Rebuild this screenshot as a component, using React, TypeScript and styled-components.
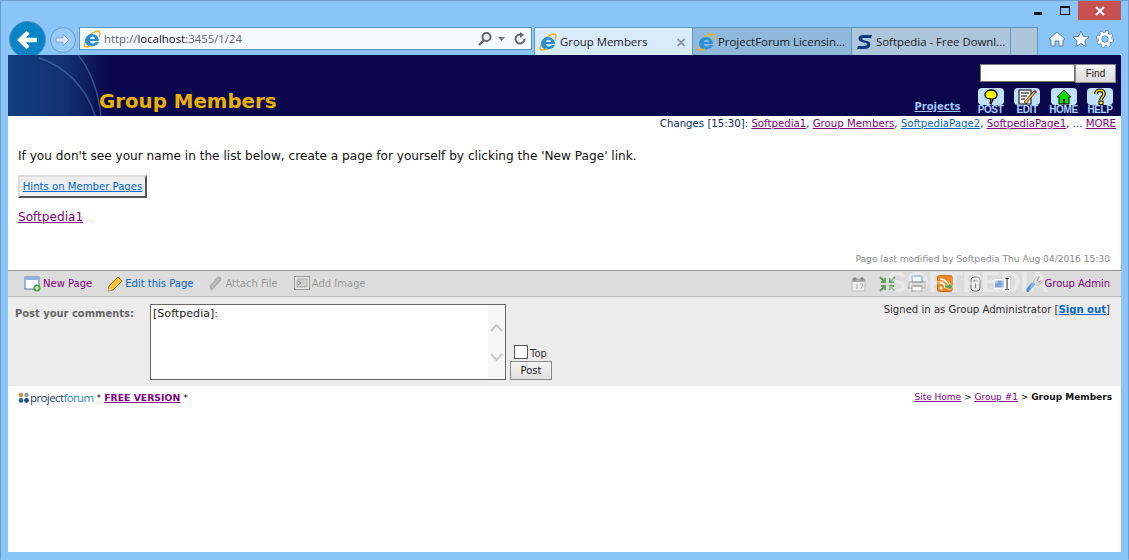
import React from "react";
import styled, { createGlobalStyle } from "styled-components";

const Global = createGlobalStyle`
    html, body { margin: 0; padding: 0; background: #8ac5fa; }
    * { box-sizing: border-box; }
`;

const Verdana = `"DejaVu Sans", Verdana, sans-serif`;
const Segoe = `"Open Sans", "Noto Sans", sans-serif`;

const Window = styled.div`
    width: 1129px;
    height: 560px;
    background: #8ac5fa;
    border: 1px solid #6a9fd0;
    border-bottom-color: #8ac5fa;
    display: flex;
    flex-direction: column;
    overflow: hidden;
`;

// 브라우저 상단
const Caption = styled.div`
    height: 20px;
    display: flex;
    justify-content: flex-end;
    padding-right: 7px;
`;
const CaptionButton = styled.div<{ $close?: boolean }>`
    width: ${(p) => (p.$close ? "43px" : "27px")};
    height: 19px;
    background: ${(p) => (p.$close ? "#c75050" : "transparent")};
    display: flex;
    align-items: center;
    justify-content: center;
    color: #fff;
`;
const MinIcon = styled.div`
    width: 8px;
    height: 3px;
    background: #111;
    margin-top: 5px;
`;
const MaxIcon = styled.div`
    width: 10px;
    height: 9px;
    border: 1px solid #111;
    border-top-width: 2px;
`;
const NavRow = styled.div`
    height: 34px;
    display: flex;
    align-items: flex-end;
    padding-left: 8px;
    position: relative;
`;
const BackClip = styled.div`
    width: 37px;
    height: 34px;
    overflow: hidden;
    flex: none;
`;
const BackButton = styled.div`
    width: 37px;
    height: 37px;
    border-radius: 50%;
    background: #0a84c6;
    border: 1px solid #5b8fb8;
    display: flex;
    align-items: center;
    justify-content: center;
`;
const Forward = styled.div`
    width: 26px;
    height: 26px;
    border-radius: 50%;
    border: 1px solid #6a9ccb;
    background: #94cbfb;
    margin: 0 3px 2px 4px;
    display: flex;
    align-items: center;
    justify-content: center;
    flex: none;
`;
const AddressBar = styled.div`
    width: 453px;
    height: 23px;
    margin-bottom: 5px;
    background: #f5faff;
    border: 1px solid #5f97c4;
    display: flex;
    align-items: center;
    padding: 0 4px 0 3px;
    gap: 3px;
    font: 11.4px ${Segoe};
    color: #666;
    flex: none;
`;
const Host = styled.span`
    color: #111;
`;
const AddressTools = styled.div`
    margin-left: auto;
    display: flex;
    align-items: center;
    gap: 5px;
    color: #666;
`;
const Tabs = styled.div`
    display: flex;
    margin-left: 2px;
    height: 28px;
    flex: none;
`;
const Tab = styled.div<{ $bg: string; $first?: boolean }>`
    width: 159px;
    height: 28px;
    background: ${(p) => p.$bg};
    border: 1px solid #5f97c4;
    border-left-width: ${(p) => (p.$first ? "1px" : "0")};
    border-bottom: 0;
    display: flex;
    align-items: center;
    gap: 3px;
    padding-left: 4px;
    font: 11.4px ${Segoe};
    color: #1a1a1a;
    white-space: nowrap;
    overflow: hidden;
`;
const NewTab = styled.div`
    width: 27px;
    height: 28px;
    background: #aec6dc;
    border: 1px solid #5f97c4;
    border-left: 0;
    border-bottom: 0;
`;
const TabClose = styled.span`
    margin-left: auto;
    margin-right: 5px;
    color: #8a97a3;
    font: bold 14px ${Verdana};
`;
const Favorites = styled.div`
    display: flex;
    gap: 6px;
    margin: 0 0 7px 10px;
    align-items: center;
`;

// 페이지 영역
const Page = styled.div`
    margin: 0 7px 0 7px;
    height: 497px;
    background: #fff;
    font-family: ${Verdana};
    display: flex;
    flex-direction: column;
    flex: none;
    position: relative;
`;
const Banner = styled.div`
    height: 61px;
    background: #0b074d;
    display: flex;
    justify-content: space-between;
    position: relative;
    overflow: hidden;
    flex: none;
`;
const BannerArt = styled.svg`
    position: absolute;
    left: 0;
    top: 0;
`;
const Title = styled.h1`
    position: relative;
    margin: 35px 0 0 91px;
    font: bold 19.8px ${Verdana};
    color: #e8b000;
    white-space: nowrap;
`;
const BannerRight = styled.div`
    display: flex;
    flex-direction: column;
    align-items: flex-end;
    padding: 9px 5px 0 0;
`;
const FindForm = styled.div`
    display: flex;
`;
const FindInput = styled.div`
    width: 95px;
    height: 18px;
    background: #fff;
    border: 1px solid #777;
`;
const FindButton = styled.div`
    width: 41px;
    height: 19px;
    background: linear-gradient(#f4f4f4, #dcdcdc);
    border: 1px solid #888;
    font: 10px "Liberation Sans", sans-serif;
    color: #222;
    display: flex;
    align-items: center;
    justify-content: center;
`;
const BannerNav = styled.div`
    display: flex;
    align-items: flex-end;
    margin: 5px 3px 0 0;
`;
const ProjectsLink = styled.a`
    font: bold 10px ${Verdana};
    color: #a0c4ff;
    text-decoration: underline;
    margin-right: 17px;
    margin-bottom: 3px;
`;
const NavButton = styled.div`
    width: 26px;
    margin-left: 10.5px;
    display: flex;
    flex-direction: column;
    align-items: center;
    &:first-of-type { margin-left: 0; }
`;
const NavIconBox = styled.div`
    width: 26px;
    height: 17px;
    background: #bfe0ff;
    border-radius: 4px;
    display: flex;
    align-items: center;
    justify-content: center;
`;
const NavLabel = styled.div`
    font: bold 10px "Liberation Sans", sans-serif;
    letter-spacing: -0.4px;
    color: #a9d2ff;
    line-height: 10px;
    white-space: nowrap;
`;
const Changes = styled.div`
    font-size: 10.2px;
    line-height: 15px;
    text-align: right;
    color: #0b2a66;
    padding-right: 5px;
    flex: none;
`;
const PageLink = styled.a<{ $fresh?: boolean }>`
    color: ${(p) => (p.$fresh ? "#0066cc" : "#800080")};
    text-decoration: underline;
`;
const Content = styled.div`
    padding: 17px 10px 0;
    height: 122px;
    flex: none;
`;
const Intro = styled.p`
    margin: 0;
    font-size: 12.12px;
    line-height: 16px;
    color: #111;
`;
const HintBox = styled.div`
    display: inline-block;
    margin-top: 11px;
    height: 23px;
    width: 129px;
    background: #eee;
    border: 2px solid;
    border-color: #ddd #555 #555 #ddd;
    font-size: 10.1px;
    line-height: 19px;
    text-align: center;
    white-space: nowrap;
`;
const MemberLink = styled.a`
    display: block;
    margin-top: 11px;
    font-size: 12.1px;
    line-height: 16px;
    color: #800080;
    text-decoration: underline;
`;
const Modified = styled.div`
    font-size: 9.1px;
    line-height: 12px;
    color: #8a8a8a;
    text-align: right;
    padding-right: 11px;
    height: 17px;
    flex: none;
`;
const Toolbar = styled.div`
    height: 27px;
    background: #dcdcdc;
    border-top: 1px solid #999;
    border-bottom: 1px solid #bbb;
    display: flex;
    align-items: center;
    padding: 0 11px 0 16px;
    font-size: 10px;
    flex: none;
    position: relative;
`;
const ToolItem = styled.div<{ $color: string; $gap?: number }>`
    display: flex;
    align-items: center;
    gap: 2px;
    color: ${(p) => p.$color};
    margin-right: ${(p) => p.$gap ?? 15}px;
    white-space: nowrap;
`;
const ToolIcons = styled.div`
    margin-left: auto;
    display: flex;
    align-items: center;
`;
const ToolSlot = styled.div<{ $gap: number }>`
    margin-right: ${(p) => p.$gap}px;
    display: flex;
`;
const Watermark = styled.div`
    position: absolute;
    right: 73px;
    top: -5px;
    font: bold 29px/32px "Liberation Sans", sans-serif;
    color: rgba(255, 255, 255, 0.4);
    letter-spacing: -0.6px;
    pointer-events: none;
`;
const CommentArea = styled.div`
    height: 89px;
    background: #ececec;
    display: flex;
    padding: 7px 11px 0 7px;
    flex: none;
`;
const CommentLabel = styled.div`
    width: 135px;
    font: bold 9.95px ${Verdana};
    color: #666;
    margin-top: 4px;
`;
const CommentBox = styled.div`
    width: 356px;
    height: 76px;
    border: 1px solid #666;
    background: #fff;
    display: flex;
    justify-content: space-between;
    font: 11.1px ${Verdana};
    color: #222;
`;
const CommentText = styled.div`
    padding: 2px;
`;
const ScrollTrack = styled.div`
    width: 17px;
    background: #f6f6f6;
    display: flex;
    flex-direction: column;
    justify-content: center;
    align-items: center;
    gap: 21px;
`;
const PostColumn = styled.div`
    margin-left: 4px;
    height: 76px;
    display: flex;
    flex-direction: column;
    justify-content: flex-end;
`;
const TopRow = styled.div`
    display: flex;
    align-items: flex-end;
    margin-left: 4px;
    font-size: 10px;
    color: #333;
    line-height: 10px;
`;
const CheckBox = styled.div`
    width: 14px;
    height: 14px;
    background: #fff;
    border: 1px solid #555;
    margin-right: 2px;
`;
const PostButton = styled.div`
    width: 42px;
    height: 19px;
    margin-top: 2px;
    background: linear-gradient(#f4f4f4, #e0e0e0);
    border: 1px solid #888;
    font: 10px ${Verdana};
    color: #222;
    display: flex;
    align-items: center;
    justify-content: center;
`;
const SignedIn = styled.div`
    margin-left: auto;
    font-size: 10.1px;
    color: #333;
    white-space: nowrap;
`;
const SignOut = styled.a`
    color: #0066cc;
    font-weight: bold;
    text-decoration: underline;
`;
const Footer = styled.div`
    display: flex;
    justify-content: space-between;
    padding: 4px 10px 0;
    font-size: 9px;
    line-height: 14px;
    color: #111;
`;
const FooterLeft = styled.div`
    display: flex;
    align-items: center;
    white-space: pre;
    font-size: 9.3px;
`;
const Logo = styled.span`
    font: 11.5px ${Segoe};
    color: #1f3f6a;
    margin-left: 0;
    letter-spacing: -0.6px;
`;
const LogoAccent = styled.span`
    color: #2b8ab0;
`;
const FreeLink = styled.a`
    color: #800080;
    font-weight: bold;
    text-decoration: underline;
`;
const Crumbs = styled.div`
    margin-right: -1px;
`;

const IeIcon = () => (
    <svg width="18" height="18" viewBox="0 0 18 18" style={{ flex: "none" }}>
        <path d="M1 15C2 9 8 2 15 1c2 0 3 2 1 6" fill="none" stroke="#f2b51c" strokeWidth="1.4" />
        <path d="M2 11c0-4 3-7 7-7s7 3 7 7H7c0 3 4 3 6 1h3c-2 6-14 6-14-1zm5-2h5c0-3-5-3-5 0z" fill="#2b8fd8" />
        <path d="M1 15c0 3 4 2 7 1" fill="none" stroke="#f2b51c" strokeWidth="1.4" />
    </svg>
);

const SoftIcon = () => (
    <svg width="17" height="18" viewBox="0 0 17 18" style={{ flex: "none" }}>
        <path d="M16 2H7C3 2 2 5 3 7c1 3 8 2 8 4 0 1-1 2-3 2H2l-1 3h8c4 0 6-3 5-6-1-3-8-2-8-4 0-1 1-1 2-1h7z" fill="#12397f" />
    </svg>
);

const BackArrow = () => (
    <svg width="22" height="22" viewBox="0 0 20 20">
        <path d="M18 10H3M10 3l-7 7 7 7" fill="none" stroke="#fff" strokeWidth="4" />
    </svg>
);

const ForwardArrow = () => (
    <svg width="16" height="16" viewBox="0 0 16 16">
        <path d="M1 6h7V2l6 6-6 6v-4H1z" fill="#d8e8f6" stroke="#7ea6cc" />
    </svg>
);

const HomeGlyph = () => (
    <svg width="18" height="18" viewBox="0 0 18 18">
        <path d="M9 2 1 9l2 1v6h4v-5h4v5h4v-6l2-1z" fill="#fff" stroke="#3f6d92" strokeWidth=".8" />
    </svg>
);
const StarGlyph = () => (
    <svg width="18" height="18" viewBox="0 0 18 18">
        <path d="M9 1l2.4 5.4 5.6.6-4.2 3.8 1.2 5.7L9 13.6l-5 2.9 1.2-5.7L1 7l5.6-.6z" fill="#fff" stroke="#3f6d92" strokeWidth=".8" />
    </svg>
);
const GearGlyph = () => (
    <svg width="18" height="18" viewBox="0 0 18 18">
        <circle cx="9" cy="9" r="5" fill="none" stroke="#3f6d92" strokeWidth="4.200" />
        <circle cx="9" cy="9" r="7" fill="none" stroke="#3f6d92" strokeWidth="3.400" strokeDasharray="3.400 2.100" />
        <circle cx="9" cy="9" r="5" fill="none" stroke="#fff" strokeWidth="3" />
        <circle cx="9" cy="9" r="7" fill="none" stroke="#fff" strokeWidth="2.400" strokeDasharray="2.600 2.900" strokeDashoffset="-.4" />
    </svg>
);

const PostGlyph = () => (
    <svg width="16" height="16" viewBox="0 0 16 16">
        <path d="M8 1c4 0 6 2 6 5 0 2-2 4-4 4l-2 5-1-1 1-4C4 10 2 8 2 6c0-3 2-5 6-5z" fill="#ffff00" stroke="#000" strokeWidth="1.300" />
    </svg>
);
const EditGlyph = () => (
    <svg width="20" height="16" viewBox="0 0 20 16">
        <rect x="2" y="1" width="12" height="14" fill="#fff" stroke="#000" />
        <path d="M4 4h8M4 7h6M4 10h4" stroke="#000" />
        <path d="M7 13 17 2l2 1L9 15z" fill="#e8b040" stroke="#000" strokeWidth=".6" />
        <path d="M16 3l2-2 2 2-1 1z" fill="#c02020" />
    </svg>
);
const HomeNavGlyph = () => (
    <svg width="16" height="16" viewBox="0 0 16 16">
        <path d="M8 1 1 8h2v7h10V8h2z" fill="#00e000" stroke="#000" />
        <rect x="7" y="10" width="2" height="5" fill="#000" />
    </svg>
);
const HelpGlyph = () => (
    <svg width="14" height="17" viewBox="0 0 14 17">
        <path d="M3 6c0-5 8-5 8 0 0 3-3 3-3 6" fill="none" stroke="#000" strokeWidth="3.6" />
        <path d="M3 6c0-5 8-5 8 0 0 3-3 3-3 6" fill="none" stroke="#ffe000" strokeWidth="1.6" />
        <rect x="6" y="13" width="4" height="3.5" fill="#ffe000" stroke="#000" />
    </svg>
);

const NewPageIcon = () => (
    <svg width="17" height="16" viewBox="0 0 17 16">
        <rect x="1" y="1" width="14" height="12" fill="#fff" stroke="#5a7fb0" />
        <rect x="1" y="1" width="14" height="3" fill="#8fb4e0" />
        <circle cx="13" cy="12" r="3.5" fill="#4aa84a" />
        <path d="M11 12h4M13 10v4" stroke="#fff" />
    </svg>
);
const PencilIcon = () => (
    <svg width="16" height="16" viewBox="0 0 16 16">
        <path d="M1 15l1-5L11 1l4 4-9 9z" fill="#f5c242" stroke="#b07a10" />
        <path d="M1 15l1-4 3 3z" fill="#e8c8a0" />
    </svg>
);
const ClipIcon = () => (
    <svg width="15" height="16" viewBox="0 0 15 16">
        <path d="M3 14 12 4c1-2-1-3-2-2L3 10c-1 2 1 3 2 2l6-7" fill="none" stroke="#b0b0b0" strokeWidth="2.200" />
    </svg>
);
const ImageIcon = () => (
    <svg width="16" height="15" viewBox="0 0 16 15">
        <rect x=".5" y=".5" width="15" height="13" fill="#e8e8e8" stroke="#999" />
        <rect x="3" y="3" width="10" height="8" fill="#d0d0d0" stroke="#aaa" />
        <path d="M4 5l3 2-3 2" fill="none" stroke="#888" />
    </svg>
);
const CalendarIcon = () => (
    <svg width="15" height="16" viewBox="0 0 15 16">
        <rect x="1" y="3" width="13" height="12" fill="#eee" stroke="#bbb" />
        <rect x="1" y="3" width="13" height="3" fill="#aaa" />
        <circle cx="4" cy="3" r="1.800" fill="#888" />
        <circle cx="11" cy="3" r="1.800" fill="#888" />
        <path d="M6 8v5M9 8h3l-2 5" stroke="#aaa" fill="none" />
    </svg>
);
const CollapseIcon = () => (
    <svg width="17" height="16" viewBox="0 0 17 16">
        <path d="M1 1l5 5M6 2v4H2M16 1l-5 5M11 2v4h4M1 15l5-5M6 14v-4H2M16 15l-5-5M11 14v-4h4" fill="none" stroke="#5c9c5c" strokeWidth="1.8" />
    </svg>
);
const PrintIcon = () => (
    <svg width="18" height="17" viewBox="0 0 18 17">
        <rect x="4" y="1" width="10" height="7" fill="#f4f8ff" stroke="#5f8fd0" />
        <rect x="1" y="7" width="16" height="6" fill="#ddd" stroke="#777" />
        <rect x="4" y="11" width="10" height="5" fill="#fff" stroke="#777" />
    </svg>
);
const RssIcon = () => (
    <svg width="16" height="17" viewBox="0 0 16 17">
        <rect x=".5" y=".5" width="15" height="16" rx="2" fill="#f08a24" stroke="#c76a10" />
        <circle cx="4" cy="13" r="1.5" fill="#fff" />
        <path d="M3 8c3 0 5 2 5 5M3 4c5 0 9 4 9 9" fill="none" stroke="#fff" strokeWidth="1.6" />
        <path d="M8 10h4V8l4 3.5-4 3.5v-2H8z" fill="#5a9c3c" stroke="#fff" strokeWidth=".4" />
    </svg>
);
const BinIcon = () => (
    <svg width="11" height="16" viewBox="0 0 11 16">
        <rect x="1" y="1" width="9" height="14" rx="3" fill="#e8e8e8" stroke="#777" />
        <path d="M3 5h5M5.500 7v5" fill="none" stroke="#777" />
    </svg>
);
const RenameIcon = () => (
    <svg width="16" height="12" viewBox="0 0 16 12">
        <rect x="0" y="1" width="16" height="10" fill="#fafafa" />
        <rect x="1" y="2.500" width="9" height="7" fill="#7fa4d8" />
        <path d="M11 .5h4M13 .5v11M11 11.500h4" stroke="#222" fill="none" />
    </svg>
);
const WrenchIcon = () => (
    <svg width="17" height="17" viewBox="0 0 17 17">
        <path d="M2 15 9 7" stroke="#4a8ad8" strokeWidth="4" strokeLinecap="round" />
        <path d="M8 8c-1-4 2-7 6-6l-3 3 2 2 3-2c1 3-3 6-6 5z" fill="#d0d0d0" stroke="#999" />
    </svg>
);
const Chevron = ({ up }: { up?: boolean }) => (
    <svg width="13" height="9" viewBox="0 0 13 9">
        <path d={up ? "M1 8l5.500-6 5.500 6" : "M1 1l5.500 6 5.500-6"} fill="none" stroke="#c8c8c8" strokeWidth="2" />
    </svg>
);
const LogoMark = () => (
    <svg width="12" height="12" viewBox="0 0 12 12">
        <circle cx="3" cy="3" r="2.200" fill="#d88a3a" />
        <circle cx="8.500" cy="3" r="2.200" fill="#8aa0b0" />
        <circle cx="3" cy="8.500" r="2.400" fill="#2a6a9a" />
        <circle cx="8.500" cy="8.500" r="2.400" fill="#1f4f7f" />
    </svg>
);

function App() {
    return (
        <Window>
            <Global />
            <Caption>
                <CaptionButton><MinIcon /></CaptionButton>
                <CaptionButton><MaxIcon /></CaptionButton>
                <CaptionButton $close>
                    <svg width="10" height="10" viewBox="0 0 10 10">
                        <path d="M1 1l8 8M9 1l-8 8" stroke="#fff" strokeWidth="2" />
                    </svg>
                </CaptionButton>
            </Caption>
            <NavRow>
                <BackClip>
                    <BackButton><BackArrow /></BackButton>
                </BackClip>
                <Forward><ForwardArrow /></Forward>
                <AddressBar>
                    <IeIcon />
                    <span>http://<Host>localhost</Host>:3455/1/24</span>
                    <AddressTools>
                        <svg width="16" height="16" viewBox="0 0 16 16">
                            <circle cx="9.500" cy="6" r="4" fill="none" stroke="#666" strokeWidth="2" />
                            <path d="M7 9l-5 5" stroke="#666" strokeWidth="2.400" />
                        </svg>
                        <svg width="7" height="4" viewBox="0 0 7 4"><path d="M0 0h7L3.500 4z" fill="#777" /></svg>
                        <svg width="14" height="14" viewBox="0 0 14 14" style={{ marginLeft: 3 }}>
                            <path d="M11.500 7A4.500 4.500 0 1 1 8 2.600" fill="none" stroke="#666" strokeWidth="2" />
                            <path d="M7 0l4 3-4 3z" fill="#666" />
                        </svg>
                    </AddressTools>
                </AddressBar>
                <Tabs>
                    <Tab $bg="#d8ebfd" $first>
                        <IeIcon />
                        Group Members
                        <TabClose>×</TabClose>
                    </Tab>
                    <Tab $bg="#8fb8da"><IeIcon />ProjectForum Licensin...</Tab>
                    <Tab $bg="#aec6dc"><SoftIcon />Softpedia - Free Downl...</Tab>
                    <NewTab />
                </Tabs>
                <Favorites>
                    <HomeGlyph />
                    <StarGlyph />
                    <GearGlyph />
                </Favorites>
            </NavRow>
            <Page>
                <Banner>
                    <BannerArt width="100" height="61" viewBox="0 0 100 61">
                        <defs>
                            <linearGradient id="art" x1="0" y1="0" x2="1" y2="0">
                                <stop offset="0" stopColor="#12407f" />
                                <stop offset="0.6" stopColor="#123070" />
                                <stop offset="1" stopColor="#0b074d" />
                            </linearGradient>
                        </defs>
                        <rect width="100" height="61" fill="url(#art)" />
                        <path d="M31 3c26 8 48 30 56 58M70 0c12 14 21 38 23 61" fill="none" stroke="#5a88c0" strokeOpacity=".5" strokeWidth="1.500" />
                    </BannerArt>
                    <Title>Group Members</Title>
                    <BannerRight>
                        <FindForm>
                            <FindInput />
                            <FindButton>Find</FindButton>
                        </FindForm>
                        <BannerNav>
                            <ProjectsLink>Projects</ProjectsLink>
                            <NavButton><NavIconBox><PostGlyph /></NavIconBox><NavLabel>POST</NavLabel></NavButton>
                            <NavButton><NavIconBox><EditGlyph /></NavIconBox><NavLabel>EDIT</NavLabel></NavButton>
                            <NavButton><NavIconBox><HomeNavGlyph /></NavIconBox><NavLabel>HOME</NavLabel></NavButton>
                            <NavButton><NavIconBox><HelpGlyph /></NavIconBox><NavLabel>HELP</NavLabel></NavButton>
                        </BannerNav>
                    </BannerRight>
                </Banner>
                <Changes>
                    Changes [15:30]: <PageLink>Softpedia1</PageLink>, <PageLink>Group Members</PageLink>,{" "}
                    <PageLink $fresh>SoftpediaPage2</PageLink>, <PageLink>SoftpediaPage1</PageLink>, ... <PageLink>MORE</PageLink>
                </Changes>
                <Content>
                    <Intro>If you don't see your name in the list below, create a page for yourself by clicking the 'New Page' link.</Intro>
                    <HintBox><PageLink $fresh>Hints on Member Pages</PageLink></HintBox>
                    <MemberLink>Softpedia1</MemberLink>
                </Content>
                <Modified>Page last modified by Softpedia Thu Aug 04/2016 15:30</Modified>
                <Toolbar>
                    <ToolItem $color="#800080"><NewPageIcon />New Page</ToolItem>
                    <ToolItem $color="#0066cc"><PencilIcon />Edit this Page</ToolItem>
                    <ToolItem $color="#999" $gap={16}><ClipIcon />Attach File</ToolItem>
                    <ToolItem $color="#999"><ImageIcon />Add Image</ToolItem>
                    <ToolIcons>
                        <ToolSlot $gap={13}><CalendarIcon /></ToolSlot>
                        <ToolSlot $gap={12}><CollapseIcon /></ToolSlot>
                        <ToolSlot $gap={11}><PrintIcon /></ToolSlot>
                        <ToolSlot $gap={17}><RssIcon /></ToolSlot>
                        <ToolSlot $gap={13}><BinIcon /></ToolSlot>
                        <ToolSlot $gap={16}><RenameIcon /></ToolSlot>
                        <ToolItem $color="#800080" $gap={0}><WrenchIcon />Group Admin</ToolItem>
                    </ToolIcons>
                    <Watermark>SOFTPEDIA</Watermark>
                </Toolbar>
                <CommentArea>
                    <CommentLabel>Post your comments:</CommentLabel>
                    <CommentBox>
                        <CommentText>[Softpedia]:</CommentText>
                        <ScrollTrack><Chevron up /><Chevron /></ScrollTrack>
                    </CommentBox>
                    <PostColumn>
                        <TopRow><CheckBox />Top</TopRow>
                        <PostButton>Post</PostButton>
                    </PostColumn>
                    <SignedIn>Signed in as Group Administrator [<SignOut>Sign out</SignOut>]</SignedIn>
                </CommentArea>
                <Footer>
                    <FooterLeft>
                        <LogoMark />
                        <Logo>project<LogoAccent>forum</LogoAccent></Logo>
                        {" * "}<FreeLink>FREE VERSION</FreeLink>{" *"}
                    </FooterLeft>
                    <Crumbs>
                        <PageLink>Site Home</PageLink> &gt; <PageLink>Group #1</PageLink> &gt; <b>Group Members</b>
                    </Crumbs>
                </Footer>
            </Page>
        </Window>
    );
}

export default App;
